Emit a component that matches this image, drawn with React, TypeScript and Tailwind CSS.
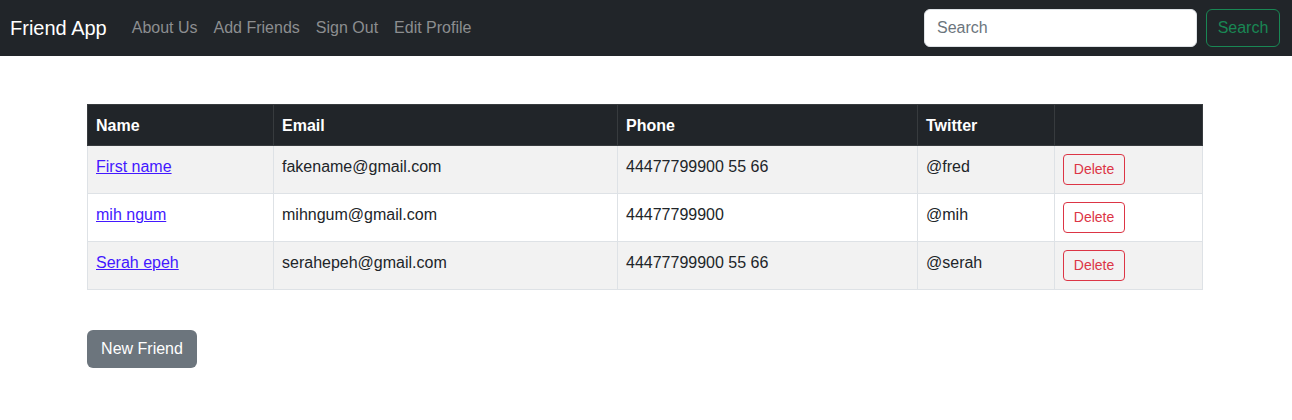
import React from "react";

const rows = [
  { name: "First name", email: "fakename@gmail.com", phone: "44477799900 55 66", twitter: "@fred" },
  { name: "mih ngum", email: "mihngum@gmail.com", phone: "44477799900", twitter: "@mih" },
  { name: "Serah epeh", email: "serahepeh@gmail.com", phone: "44477799900 55 66", twitter: "@serah" },
];

export default function App() {
  return (
    <div className="min-h-[420px] bg-white text-[#212529]" style={{ fontFamily: '"Liberation Sans", Arial, sans-serif' }}>
      <nav className="h-14 bg-[#212529] flex items-center pl-[10px] pr-3">
        <span className="text-white text-[20px] leading-[30px] mr-[17px]">Friend App</span>
        <div className="flex items-center">
          {["About Us", "Add Friends", "Sign Out", "Edit Profile"].map((l) => (
            <a key={l} className="px-2 text-[16px] leading-6 text-[#8c8e90]">{l}</a>
          ))}
        </div>
        <div className="ml-auto flex items-center gap-[9px]">
          <input
            placeholder="Search"
            className="w-[273px] h-[38px] bg-white rounded-[6px] border border-[#dee2e6] px-3 text-[16px] placeholder:text-[#6c757d] outline-none"
          />
          <button className="w-[74px] h-[38px] rounded-[6px] border border-[#198754] text-[#198754] text-[16px]">Search</button>
        </div>
      </nav>
      <main className="pl-[87px] pt-12">
        <table className="w-[1115px] table-fixed border-collapse text-[16px] leading-6">
          <thead>
            <tr className="bg-[#212529] text-white font-bold">
              <th className="w-[186px] text-left px-2 pt-[9px] pb-[7px] border border-[#373b3e]">Name</th>
              <th className="w-[344px] text-left px-2 pt-[9px] pb-[7px] border border-[#373b3e]">Email</th>
              <th className="w-[300px] text-left px-2 pt-[9px] pb-[7px] border border-[#373b3e]">Phone</th>
              <th className="w-[137px] text-left px-2 pt-[9px] pb-[7px] border border-[#373b3e]">Twitter</th>
              <th className="w-[148px] text-left px-2 pt-[9px] pb-[7px] border border-[#373b3e]"></th>
            </tr>
          </thead>
          <tbody>
            {rows.map((r, i) => (
              <tr key={r.email} className={i % 2 === 0 ? "bg-[#f2f2f2]" : "bg-white"}>
                <td className="align-top px-2 pt-[9px] pb-[7px] border border-[#dee2e6]">
                  <a className="text-[#4318ff] underline">{r.name}</a>
                </td>
                <td className="align-top px-2 pt-[9px] pb-[7px] border border-[#dee2e6]">{r.email}</td>
                <td className="align-top px-2 pt-[9px] pb-[7px] border border-[#dee2e6]">{r.phone}</td>
                <td className="align-top px-2 pt-[9px] pb-[7px] border border-[#dee2e6]">{r.twitter}</td>
                <td className="align-top px-2 py-2 border border-[#dee2e6]">
                  <button className="w-[62px] h-[31px] rounded-[4px] border border-[#dc3545] text-[#dc3545] text-[14px] leading-[21px] bg-transparent">
                    Delete
                  </button>
                </td>
              </tr>
            ))}
          </tbody>
        </table>
        <button className="mt-10 w-[110px] h-[38px] rounded-[6px] bg-[#6c757d] text-white text-[16px]">New Friend</button>
      </main>
    </div>
  );
}
